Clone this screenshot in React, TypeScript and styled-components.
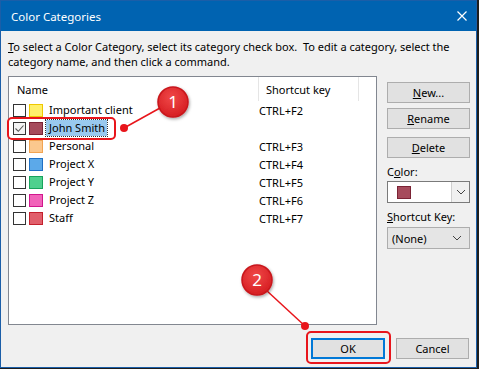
import React from 'react';
import styled, { createGlobalStyle } from 'styled-components';

const GlobalStyle = createGlobalStyle`
  html, body {
    margin: 0;
    padding: 0;
    background: #1d1d1d;
  }
  body {
    width: 479px;
    height: 369px;
    overflow: hidden;
    font-family: 'Noto Sans', sans-serif;
    font-size: 11px;
    color: #000;
  }
`;

type Category = {
  name: string;
  fill: string;
  stroke: string;
  shortcut?: string;
  checked?: boolean;
  selected?: boolean;
};

const CATEGORIES: Category[] = [
  { name: 'Important client', fill: '#fff06a', stroke: '#efc800', shortcut: 'CTRL+F2' },
  { name: 'John Smith', fill: '#a64b5c', stroke: '#7b2335', checked: true, selected: true },
  { name: 'Personal', fill: '#fbc88e', stroke: '#f2a452', shortcut: 'CTRL+F3' },
  { name: 'Project X', fill: '#5ca9e9', stroke: '#1f70c4', shortcut: 'CTRL+F4' },
  { name: 'Project Y', fill: '#4fd08e', stroke: '#17a35c', shortcut: 'CTRL+F5' },
  { name: 'Project Z', fill: '#f163b9', stroke: '#d1168d', shortcut: 'CTRL+F6' },
  { name: 'Staff', fill: '#e15f6b', stroke: '#c3202d', shortcut: 'CTRL+F7' },
];

const Chevron = () => (
  <svg width="10" height="6" viewBox="0 0 10 6">
    <path d="M1 1 L5 5 L9 1" fill="none" stroke="#444" strokeWidth="1" />
  </svg>
);

const App: React.FC = () => {
  return (
    <>
      <GlobalStyle />
      <Dialog>
        <TitleBar>
          <Title>Color Categories</Title>
          <CloseIcon viewBox="0 0 10 10">
            <path d="M0.5 0.5 L9.5 9.5 M9.5 0.5 L0.5 9.5" stroke="#fff" strokeWidth="1.2" />
          </CloseIcon>
        </TitleBar>
        <Body>
          <Intro>
            <u>T</u>o select a Color Category, select its category check box.&nbsp; To edit a category, select the
            <br />
            category name, and then click a command.
          </Intro>
          <Main>
            <ListBox>
              <HeaderRow>
                <NameHeader>Name</NameHeader>
                <KeyHeader>Shortcut key</KeyHeader>
              </HeaderRow>
              {CATEGORIES.map((c) => (
                <Row key={c.name}>
                  <CheckBox checked={c.checked}>
                    {c.checked && (
                      <svg width="11" height="11" viewBox="0 0 11 11">
                        <path d="M1.5 5.5 L4.3 8.3 L9.5 2.5" fill="none" stroke="#555" strokeWidth="1.1" />
                      </svg>
                    )}
                  </CheckBox>
                  <Swatch fill={c.fill} stroke={c.stroke} />
                  <NameCell>
                    <NameText selected={c.selected}>{c.name}</NameText>
                  </NameCell>
                  <KeyCell>{c.shortcut}</KeyCell>
                </Row>
              ))}
            </ListBox>
            <SidePanel>
              <Button style={{ marginTop: 6 }}>
                <u>N</u>ew...
              </Button>
              <Button style={{ marginTop: 5 }}>
                <u>R</u>ename
              </Button>
              <Button style={{ marginTop: 8 }}>
                <u>D</u>elete
              </Button>
              <FieldLabel>
                C<u>o</u>lor:
              </FieldLabel>
              <ColorCombo>
                <ColorValue>
                  <Swatch fill="#a64b5c" stroke="#7b2335" />
                </ColorValue>
                <ComboArrow>
                  <Chevron />
                </ComboArrow>
              </ColorCombo>
              <FieldLabel>
                <u>S</u>hortcut Key:
              </FieldLabel>
              <KeyCombo>
                <span>(None)</span>
                <Chevron />
              </KeyCombo>
            </SidePanel>
          </Main>
          <Footer>
            <Button primary width={74}>OK</Button>
            <Button width={73}>Cancel</Button>
          </Footer>
        </Body>
        <Annotations viewBox="0 0 477 368" width="477" height="368">
          <defs>
            <radialGradient id="badge" cx="45%" cy="35%" r="70%">
              <stop offset="0%" stopColor="#f04848" />
              <stop offset="100%" stopColor="#d41a1f" />
            </radialGradient>
            <filter id="shadow" x="-50%" y="-50%" width="200%" height="200%">
              <feDropShadow dx="1" dy="1.5" stdDeviation="1.5" floodColor="#000" floodOpacity="0.35" />
            </filter>
          </defs>
          <rect x="8" y="118" width="107" height="21" rx="4" fill="none" stroke="#e8151b" strokeWidth="2" />
          <line x1="124" y1="128" x2="160" y2="108" stroke="#e8151b" strokeWidth="1.5" />
          <circle cx="124" cy="128" r="4" fill="#e8151b" />
          <circle cx="173" cy="102" r="15" fill="url(#badge)" stroke="#c8161b" strokeWidth="1.5" filter="url(#shadow)" />
          <BadgeText x="173" y="108" textAnchor="middle">1</BadgeText>

          <rect x="307" y="332" width="83" height="31" rx="4" fill="none" stroke="#e8151b" strokeWidth="2" />
          <line x1="266" y1="290" x2="305" y2="326" stroke="#e8151b" strokeWidth="1.5" />
          <circle cx="305" cy="326" r="4" fill="#e8151b" />
          <circle cx="257" cy="280" r="15" fill="url(#badge)" stroke="#c8161b" strokeWidth="1.5" filter="url(#shadow)" />
          <BadgeText x="257" y="286" textAnchor="middle">2</BadgeText>
        </Annotations>
      </Dialog>
    </>
  );
};

const Dialog = styled.div`
  position: relative;
  width: 477px;
  height: 368px;
  box-sizing: border-box;
  border: 1px solid #1b5ea8;
  background: #f0f0f0;
  display: flex;
  flex-direction: column;
`;

const TitleBar = styled.div`
  height: 30px;
  flex-shrink: 0;
  background: #0063b1;
  color: #fff;
  display: flex;
  align-items: center;
  justify-content: space-between;
  padding: 0 9px 0 10px;
`;

const Title = styled.span`
  font-size: 11.5px;
`;

const CloseIcon = styled.svg`
  width: 10px;
  height: 10px;
`;

const Body = styled.div`
  flex: 1;
  display: flex;
  flex-direction: column;
  padding: 8px 6px 0 7px;
`;

const Intro = styled.p`
  margin: 0;
  line-height: 15px;
  white-space: nowrap;
`;

const Main = styled.div`
  display: flex;
  margin-top: 7px;
  gap: 10px;
`;

const ListBox = styled.div`
  width: 370px;
  height: 249px;
  box-sizing: border-box;
  border: 1px solid #828790;
  background: #fff;
`;

const HeaderRow = styled.div`
  display: flex;
  height: 24px;
  align-items: center;
`;

const NameHeader = styled.div`
  width: 250px;
  box-sizing: border-box;
  padding-left: 8px;
  height: 100%;
  display: flex;
  align-items: center;
  border-right: 1px solid #e5e5e5;
`;

const KeyHeader = styled.div`
  width: 100px;
  box-sizing: border-box;
  padding-left: 7px;
  height: 100%;
  display: flex;
  align-items: center;
  border-right: 1px solid #e5e5e5;
`;

const Row = styled.div`
  display: flex;
  align-items: center;
  height: 18px;
  padding-left: 4px;
`;

const CheckBox = styled.div<{ checked?: boolean }>`
  width: 13px;
  height: 13px;
  box-sizing: border-box;
  border: 1px solid #333;
  background: ${(p) => (p.checked ? '#f3f3f3' : '#fff')};
  display: flex;
  align-items: center;
  justify-content: center;
`;

const Swatch = styled.div<{ fill: string; stroke: string }>`
  width: 14px;
  height: 13px;
  box-sizing: border-box;
  margin-left: 3px;
  background: ${(p) => p.fill};
  border: 1px solid ${(p) => p.stroke};
`;

const NameCell = styled.div`
  width: 216px;
  box-sizing: border-box;
  padding-left: 3px;
`;

const NameText = styled.span<{ selected?: boolean }>`
  display: inline-block;
  padding: 0 2px 0 3px;
  line-height: 16px;
  background: ${(p) => (p.selected ? '#99c9ef' : 'transparent')};
  outline: ${(p) => (p.selected ? '1px dotted #333' : 'none')};
`;

const KeyCell = styled.div`
  padding-left: 0;
`;

const SidePanel = styled.div`
  width: 83px;
  display: flex;
  flex-direction: column;
`;

const Button = styled.div<{ primary?: boolean; width?: number }>`
  width: ${(p) => p.width ?? 83}px;
  height: 21px;
  box-sizing: border-box;
  background: #e1e1e1;
  border: ${(p) => (p.primary ? '2px solid #0078d7' : '1px solid #adadad')};
  display: flex;
  align-items: center;
  justify-content: center;
`;

const FieldLabel = styled.div`
  margin-top: 6px;
  line-height: 15px;
`;

const ColorCombo = styled.div`
  margin-top: 2px;
  height: 22px;
  box-sizing: border-box;
  border: 1px solid #7a7a7a;
  background: #fff;
  display: flex;
`;

const ColorValue = styled.div`
  flex: 1;
  display: flex;
  align-items: center;
  padding-left: 6px;
`;

const ComboArrow = styled.div`
  width: 17px;
  border-left: 1px solid #cfcfcf;
  background: #f0f0f0;
  display: flex;
  align-items: center;
  justify-content: center;
`;

const KeyCombo = styled.div`
  margin-top: 3px;
  height: 22px;
  box-sizing: border-box;
  border: 1px solid #adadad;
  background: #e5e5e5;
  display: flex;
  align-items: center;
  justify-content: space-between;
  padding: 0 7px 0 4px;
`;

const Footer = styled.div`
  display: flex;
  justify-content: flex-end;
  gap: 11px;
  margin-top: 13px;
  padding-right: 1px;
`;

const Annotations = styled.svg`
  position: absolute;
  left: -1px;
  top: -1px;
  pointer-events: none;
  overflow: visible;
`;

const BadgeText = styled.text`
  font-family: 'Noto Sans', sans-serif;
  font-size: 17px;
  fill: #fff;
`;

export default App;
